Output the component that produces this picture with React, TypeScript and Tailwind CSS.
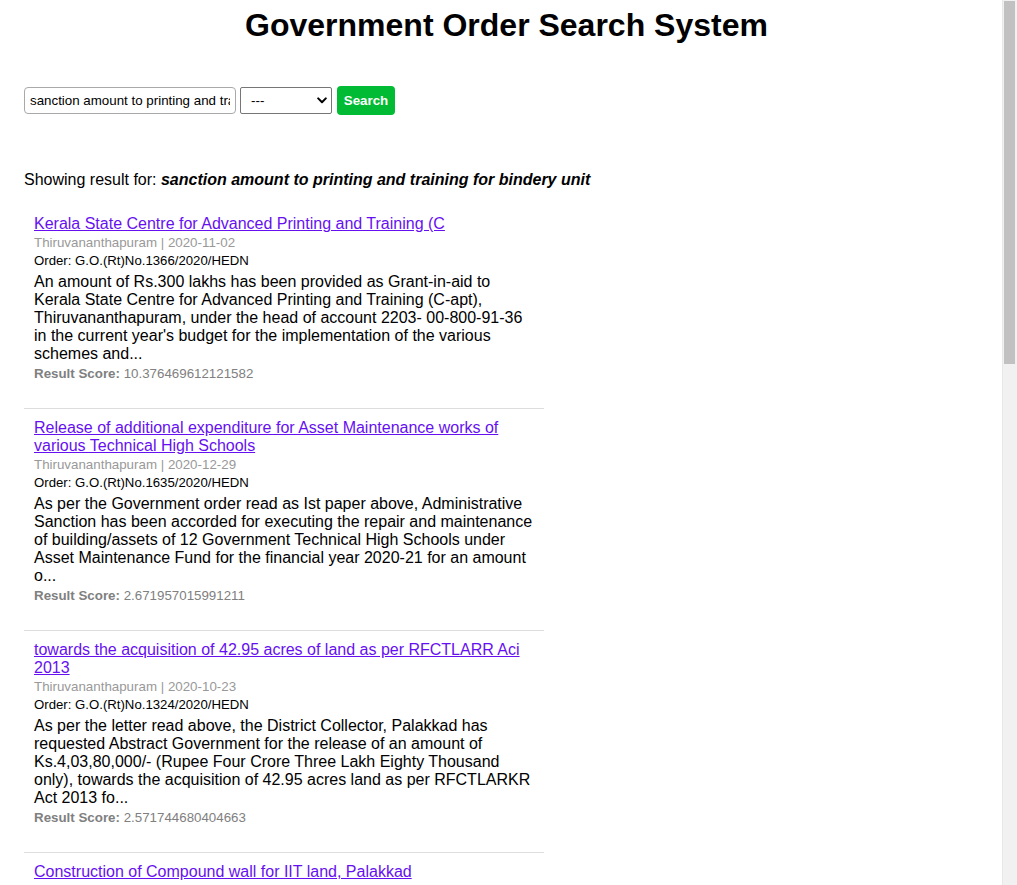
import React, { useState } from 'react';

type Order = {
  title: string;
  place: string;
  date: string;
  order: string;
  summary: string;
  score: string;
};

const results: Order[] = [
  {
    title: 'Kerala State Centre for Advanced Printing and Training (C',
    place: 'Thiruvananthapuram',
    date: '2020-11-02',
    order: 'G.O.(Rt)No.1366/2020/HEDN',
    summary:
      "An amount of Rs.300 lakhs has been provided as Grant-in-aid to Kerala State Centre for Advanced Printing and Training (C-apt), Thiruvananthapuram, under the head of account 2203- 00-800-91-36 in the current year's budget for the implementation of the various schemes and...",
    score: '10.376469612121582',
  },
  {
    title: 'Release of additional expenditure for Asset Maintenance works of various Technical High Schools',
    place: 'Thiruvananthapuram',
    date: '2020-12-29',
    order: 'G.O.(Rt)No.1635/2020/HEDN',
    summary:
      'As per the Government order read as Ist paper above, Administrative Sanction has been accorded for executing the repair and maintenance of building/assets of 12 Government Technical High Schools under Asset Maintenance Fund for the financial year 2020-21 for an amount o...',
    score: '2.671957015991211',
  },
  {
    title: 'towards the acquisition of 42.95 acres of land as per RFCTLARR Aci 2013',
    place: 'Thiruvananthapuram',
    date: '2020-10-23',
    order: 'G.O.(Rt)No.1324/2020/HEDN',
    summary:
      'As per the letter read above, the District Collector, Palakkad has requested Abstract Government for the release of an amount of Ks.4,03,80,000/- (Rupee Four Crore Three Lakh Eighty Thousand only), towards the acquisition of 42.95 acres land as per RFCTLARKR Act 2013 fo...',
    score: '2.571744680404663',
  },
  {
    title: 'Construction of Compound wall for IIT land, Palakkad',
    place: 'Thiruvananthapuram',
    date: '2020-09-17',
    order: 'G.O.(Rt)No.1187/2020/HEDN',
    summary:
      'As per the letter read above, the Director, IIT Palakkad has requested sanction for the construction of compound wall for the land handed over to the Institute at Kanjikode. Government have examined the matter in detail and are pleased to accord sanction for the...',
    score: '2.412086725234985',
  },
  {
    title: 'Sanction accorded for the purchase of equipment for Government Polytechnic College',
    place: 'Thiruvananthapuram',
    date: '2020-08-11',
    order: 'G.O.(Rt)No.1042/2020/HEDN',
    summary:
      'As per the letter read above, the Director of Technical Education has forwarded a proposal for the purchase of equipment for the laboratories of Government Polytechnic College, Kalamassery, and Government have examined the proposal in detail and are pleased to...',
    score: '2.298113584518433',
  },
  {
    title: 'Release of funds to State Institute of Encyclopaedic Publications',
    place: 'Thiruvananthapuram',
    date: '2020-07-06',
    order: 'G.O.(Rt)No.0918/2020/HEDN',
    summary:
      'An amount of Rs.150 lakhs has been earmarked in the budget for the current financial year under the head of account 2205-00-800-63 for the printing and publication activities of the State Institute of Encyclopaedic Publications and Government are pleased to...',
    score: '2.104957580566406',
  },
  {
    title: 'Training programme for staff of bindery unit at Government Press',
    place: 'Thiruvananthapuram',
    date: '2020-06-19',
    order: 'G.O.(Rt)No.0871/2020/HEDN',
    summary:
      'As per the proposal read above, the Superintendent of Government Presses has requested sanction for conducting a training programme for the staff of the bindery unit in modern binding techniques in association with C-apt, Thiruvananthapuram during the year...',
    score: '1.987654209136963',
  },
  {
    title: 'Administrative sanction for renovation of hostel building, Government Engineering College',
    place: 'Thiruvananthapuram',
    date: '2020-05-28',
    order: 'G.O.(Rt)No.0802/2020/HEDN',
    summary:
      "As per the letter read above, the Principal, Government Engineering College, Thrissur has submitted an estimate for the renovation of the men's hostel building. Government have examined the matter and are pleased to accord administrative sanction for an amount...",
    score: '1.843362331390381',
  },
  {
    title: 'Sanction for payment of pending bills to Kerala Books and Publications Society',
    place: 'Thiruvananthapuram',
    date: '2020-04-15',
    order: 'G.O.(Rt)No.0733/2020/HEDN',
    summary:
      'As per the letter read above, the Managing Director, Kerala Books and Publications Society has requested the release of an amount for the settlement of pending bills relating to the printing of text books for the academic year 2019-20 and Government are...',
    score: '1.702211618423462',
  },
];

const ResultItem = ({ r }: { r: Order }) => (
  <div className="w-[520px] px-[10px] pt-[10px] pb-[27px] border-b border-[#dddddd]">
    <a href="#" className="block text-[16px] leading-[18px] text-[#6610f2] underline">
      {r.title}
    </a>
    <div className="mt-[2px] text-[13.333px] leading-[15px] text-[#999999]">
      {r.place} | {r.date}
    </div>
    <div className="mt-[3px] text-[13.2px] leading-[15px] text-black">Order: {r.order}</div>
    <p className="mt-[5px] text-[16px] leading-[18px] text-black">{r.summary}</p>
    <div className="mt-[3px] text-[13.333px] leading-[15px] text-[#808080]">
      <span className="font-bold">Result Score:</span> {r.score}
    </div>
  </div>
);

const App = () => {
  const [query, setQuery] = useState('sanction amount to printing and training for bindery unit');
  const [dept, setDept] = useState('');

  return (
    <div className="min-h-screen bg-white px-6 pt-[7px] pb-[24px] text-black font-['Liberation_Sans',Arial,sans-serif]">
      <h1 className="pr-[4px] text-center text-[32px] leading-[37px] font-bold">Government Order Search System</h1>

      {/* search form */}
      <div className="mt-[42px] flex items-center">
        <input
          type="text"
          value={query}
          onChange={(e) => setQuery(e.target.value)}
          className="h-[27px] w-[212px] rounded-[4px] border border-[#a9a9a9] px-[5px] text-[13.333px] text-black outline-none"
        />
        <div className="relative ml-[4px]">
          <select
            value={dept}
            onChange={(e) => setDept(e.target.value)}
            className="h-[27px] w-[92px] appearance-none rounded-[2px] border border-[#767676] pl-[10px] text-[13.333px] text-black outline-none"
          >
            <option value="">---</option>
            <option value="HEDN">HEDN</option>
            <option value="GEDN">GEDN</option>
          </select>
          <svg
            className="pointer-events-none absolute right-[5px] top-[10px]"
            width="10"
            height="7"
            viewBox="0 0 10 7"
            fill="none"
          >
            <path d="M1.2 1.4 5 5.2 8.8 1.4" stroke="#000" strokeWidth="2" strokeLinecap="round" strokeLinejoin="round" />
          </svg>
        </div>
        <button className="ml-[5px] h-[29px] w-[58px] rounded-[4px] bg-[#00bb33] text-[13.333px] font-bold text-white">
          Search
        </button>
      </div>

      <p className="mt-[56px] text-[16px] leading-[18px]">
        Showing result for: <span className="font-bold italic">{query}</span>
      </p>

      <div className="mt-[16px]">
        {results.map((r) => (
          <ResultItem key={r.order} r={r} />
        ))}
      </div>

      {/* window scrollbar */}
      <div className="fixed right-0 top-0 h-screen w-[15px] border-l border-[#e8e8e8] bg-[#f1f1f1]">
        <div className="ml-[1px] mt-[1px] h-[363px] w-[11px] bg-[#c1c1c1]" />
      </div>
    </div>
  );
};

export default App;
